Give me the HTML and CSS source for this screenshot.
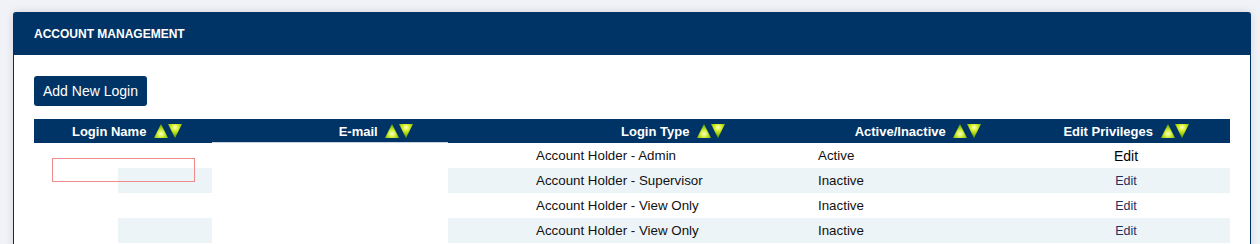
FILE: index.html
```html
<!DOCTYPE html>
<html lang="en">
<head>
  <meta charset="UTF-8" />
  <title>Account Management</title>
  <link rel="stylesheet" href="styles.css">
</head>
<body>
  <div class="panel">
    <div class="panel-head">ACCOUNT MANAGEMENT</div>
    <div class="panel-body">
      <button class="add-btn">Add New Login</button>
      <div class="table-wrap">
        <svg class="defs" width="0" height="0">
          <defs>
            <radialGradient id="gu" cx="0.5" cy="0.7" r="0.6">
              <stop offset="0" stop-color="#fcffd8"/>
              <stop offset="0.4" stop-color="#d4f03a"/>
              <stop offset="1" stop-color="#72b000"/>
            </radialGradient>
            <radialGradient id="gd" cx="0.5" cy="0.25" r="0.6">
              <stop offset="0" stop-color="#fdffc8"/>
              <stop offset="0.4" stop-color="#d8f02a"/>
              <stop offset="1" stop-color="#72b000"/>
            </radialGradient>
          </defs>
        </svg>
        <table class="logins">
          <colgroup>
            <col style="width:186px">
            <col style="width:312px">
            <col style="width:282px">
            <col style="width:208px">
            <col style="width:208px">
          </colgroup>
          <thead>
            <tr>
              <th>Login Name <span class="sort"><svg width="28" height="14" viewBox="0 0 28 14"><path d="M7 0 L14 14 L0 14 Z" fill="url(#gu)"/><path d="M14 0 L28 0 L21 14 Z" fill="url(#gd)"/></svg></span></th>
              <th>E-mail <span class="sort"><svg width="28" height="14" viewBox="0 0 28 14"><path d="M7 0 L14 14 L0 14 Z" fill="url(#gu)"/><path d="M14 0 L28 0 L21 14 Z" fill="url(#gd)"/></svg></span></th>
              <th>Login Type <span class="sort"><svg width="28" height="14" viewBox="0 0 28 14"><path d="M7 0 L14 14 L0 14 Z" fill="url(#gu)"/><path d="M14 0 L28 0 L21 14 Z" fill="url(#gd)"/></svg></span></th>
              <th>Active/Inactive <span class="sort"><svg width="28" height="14" viewBox="0 0 28 14"><path d="M7 0 L14 14 L0 14 Z" fill="url(#gu)"/><path d="M14 0 L28 0 L21 14 Z" fill="url(#gd)"/></svg></span></th>
              <th>Edit Privileges <span class="sort"><svg width="28" height="14" viewBox="0 0 28 14"><path d="M7 0 L14 14 L0 14 Z" fill="url(#gu)"/><path d="M14 0 L28 0 L21 14 Z" fill="url(#gd)"/></svg></span></th>
            </tr>
          </thead>
          <tbody>
            <tr>
              <td></td><td></td>
              <td>Account Holder - Admin</td>
              <td>Active</td>
              <td class="edit first">Edit</td>
            </tr>
            <tr class="alt">
              <td></td><td></td>
              <td>Account Holder - Supervisor</td>
              <td>Inactive</td>
              <td class="edit"><a href="#">Edit</a></td>
            </tr>
            <tr>
              <td></td><td></td>
              <td>Account Holder - View Only</td>
              <td>Inactive</td>
              <td class="edit"><a href="#">Edit</a></td>
            </tr>
            <tr class="alt">
              <td></td><td></td>
              <td>Account Holder - View Only</td>
              <td>Inactive</td>
              <td class="edit"><a href="#">Edit</a></td>
            </tr>
          </tbody>
        </table>
        <div class="mask mask-name"></div>
        <div class="mask mask-mail"></div>
        <div class="mark"></div>
      </div>
    </div>
  </div>
</body>
</html>
```

FILE: styles.css
```css
body {
  margin: 0;
  padding: 12px 9px 0 13px;
  background: #f1f2f7;
  font-family: "Liberation Sans", Arial, sans-serif;
}
.panel {
  background: #fff;
  border: 1px solid #003366;
  border-bottom: none;
  border-radius: 3px 3px 0 0;
  box-shadow: 0 0 8px rgba(0, 0, 40, 0.12);
  height: 240px;
}
.panel-head {
  background: #003366;
  color: #fff;
  font-size: 12px;
  font-weight: bold;
  height: 42px;
  line-height: 42px;
  padding-left: 20px;
}
.panel-body {
  padding: 21px 20px 0 20px;
}
.add-btn {
  background: #003366;
  color: #fff;
  font-family: "Liberation Sans", Arial, sans-serif;
  font-size: 14px;
  border: none;
  border-radius: 3px;
  height: 30px;
  padding: 0 9px;
  cursor: pointer;
}
.table-wrap {
  position: relative;
  margin-top: 13px;
}
.defs {
  position: absolute;
}
.logins {
  width: 100%;
  border-collapse: collapse;
  table-layout: fixed;
  font-size: 13.33px;
}
.logins th {
  background: #003366;
  color: #fff;
  font-size: 13px;
  font-weight: bold;
  height: 23px;
  padding: 1px 0 0 0;
  line-height: 23px;
  text-align: center;
  white-space: nowrap;
}
.sort {
  display: inline-block;
  vertical-align: -2px;
  margin-left: 4px;
  height: 14px;
}
.sort svg {
  display: block;
}
.logins td {
  height: 24px;
  padding: 1px 0 0 4px;
  line-height: 24px;
  color: #111;
  white-space: nowrap;
}
.logins tr.alt td {
  background: #edf4f8;
}
.logins td.edit {
  text-align: center;
  padding: 1px 0 0 0;
}
.logins td.edit a {
  color: #1d2f63;
  font-size: 12.5px;
  text-decoration: none;
}
.logins td.first {
  color: #000;
  font-size: 14px;
}
.mask {
  position: absolute;
  background: #fff;
  bottom: 0;
}
.mask-name {
  left: 0;
  top: 24px;
  width: 84px;
}
.mask-mail {
  left: 178px;
  top: 23px;
  width: 236px;
  border-top: 1px solid #c8d2e0;
}
.mark {
  position: absolute;
  left: 18px;
  top: 39px;
  width: 141px;
  height: 22px;
  border: 1px solid #ee8a8a;
}
```
